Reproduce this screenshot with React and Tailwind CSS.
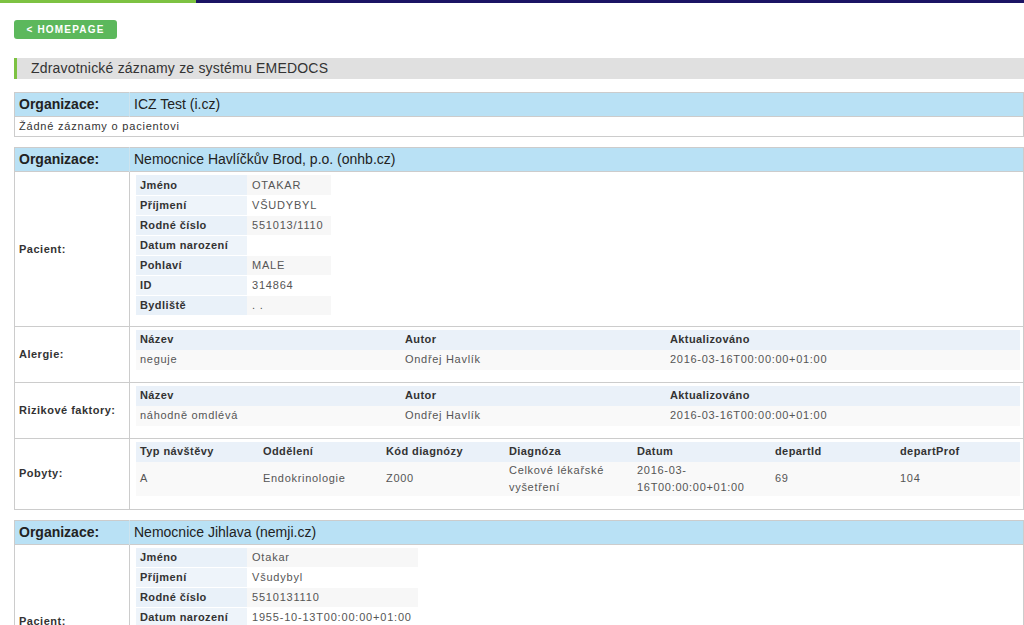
import React from 'react';

const patient1 = [
  ['Jméno', 'OTAKAR'],
  ['Příjmení', 'VŠUDYBYL'],
  ['Rodné číslo', '551013/1110'],
  ['Datum narození', ''],
  ['Pohlaví', 'MALE'],
  ['ID', '314864'],
  ['Bydliště', '. .'],
];

const patient2 = [
  ['Jméno', 'Otakar'],
  ['Příjmení', 'Všudybyl'],
  ['Rodné číslo', '5510131110'],
  ['Datum narození', '1955-10-13T00:00:00+01:00'],
  ['Pohlaví', 'MALE'],
  ['ID', '2093415'],
  ['Bydliště', 'Jihlava'],
];

const PatientTable = ({ rows }) => (
  <table className="border-collapse text-[11px]">
    <tbody>
      {rows.map(([label, value], i) => (
        <tr key={label} className="h-[20px] border-b border-white">
          <td className={`w-[111px] pl-[4px] font-bold tracking-[0.4px] text-[#333] ${i % 2 === 0 ? 'bg-[#e9f1f9]' : 'bg-[#eef4fa]'}`}>{label}</td>
          <td className={`min-w-[84px] pl-[5px] pr-[6px] tracking-[0.8px] text-[#555] ${i % 2 === 0 ? 'bg-[#f7f7f7]' : 'bg-white'}`}>{value}</td>
        </tr>
      ))}
    </tbody>
  </table>
);

const DataTable = ({ cols, widths, row, tall }) => (
  <table className="w-[884px] table-fixed border-collapse text-[11px]">
    <colgroup>
      {widths.map((w, i) => (
        <col key={i} style={{ width: w }} />
      ))}
    </colgroup>
    <thead>
      <tr className="h-[20px] bg-[#eaf1f9]">
        {cols.map((c) => (
          <th key={c} className="pl-[4px] text-left font-bold tracking-[0.4px] text-[#333]">{c}</th>
        ))}
      </tr>
    </thead>
    <tbody>
      <tr className={`${tall ? 'h-[34px]' : 'h-[20px]'} bg-[#f9f9f9]`}>
        {row.map((v, i) => (
          <td key={i} className="pl-[4px] pr-[4px] leading-[17px] tracking-[0.7px] text-[#555]">{v}</td>
        ))}
      </tr>
    </tbody>
  </table>
);

const Section = ({ label, children, bottom = 'pb-[12px]' }) => (
  <tr className="border-t border-[#ccc]">
    <td className="border-r border-[#ccc] pl-[4px] text-[11px] font-bold tracking-[0.5px] text-[#333]">{label}</td>
    <td className={`pl-[6px] pr-[3px] pt-[3px] align-top ${bottom}`}>{children}</td>
  </tr>
);

const OrgTable = ({ name, children }) => (
  <table className="mb-[10px] w-[1010px] border-collapse border border-[#ccc]">
    <thead>
      <tr className="h-[24px] bg-[#b9e1f5]">
        <th className="w-[115px] border-r border-[#cde3ee] pl-[4px] text-left text-[14px] font-bold text-[#222]">Organizace:</th>
        <td className="pl-[4px] text-[14px] text-[#222]">{name}</td>
      </tr>
    </thead>
    <tbody>{children}</tbody>
  </table>
);

const listCols = ['Název', 'Autor', 'Aktualizováno'];
const listWidths = ['265px', '265px', '354px'];

export default function App() {
  return (
    <div className="min-h-screen overflow-hidden bg-white font-['Liberation_Sans',Arial,sans-serif] text-[#333]">
      <div className="flex h-[3px]">
        <div className="w-[196px] bg-[#7dc242]" />
        <div className="flex-1 bg-[#1b1464]" />
      </div>
      <div className="pl-[14px] pt-[17px]">
        <button className="block h-[19px] w-[103px] rounded-[3px] bg-[#5cb85c] text-[10px] font-bold tracking-[1.2px] text-white">
          &lt; HOMEPAGE
        </button>
        <div className="mb-[13px] mt-[19px] h-[21px] w-[1010px] border-l-[3px] border-[#7dc242] bg-[#e0e0e0] pl-[14px] text-[14px] leading-[21px] tracking-[0.2px] text-[#333]">
          Zdravotnické záznamy ze systému EMEDOCS
        </div>

        <OrgTable name="ICZ Test (i.cz)">
          <tr className="h-[20px] border-t border-[#ccc]">
            <td colSpan={2} className="pl-[4px] text-[11px] tracking-[0.8px] text-[#333]">Žádné záznamy o pacientovi</td>
          </tr>
        </OrgTable>

        <OrgTable name="Nemocnice Havlíčkův Brod, p.o. (onhb.cz)">
          <Section label="Pacient:" bottom="pb-[10px]">
            <PatientTable rows={patient1} />
          </Section>
          <Section label="Alergie:">
            <DataTable cols={listCols} widths={listWidths} row={['neguje', 'Ondřej Havlík', '2016-03-16T00:00:00+01:00']} />
          </Section>
          <Section label="Rizikové faktory:">
            <DataTable cols={listCols} widths={listWidths} row={['náhodně omdlévá', 'Ondřej Havlík', '2016-03-16T00:00:00+01:00']} />
          </Section>
          <Section label="Pobyty:" bottom="pb-[13px]">
            <DataTable
              tall
              cols={['Typ návštěvy', 'Oddělení', 'Kód diagnózy', 'Diagnóza', 'Datum', 'departId', 'departProf']}
              widths={['123px', '123px', '123px', '128px', '138px', '125px', '124px']}
              row={['A', 'Endokrinologie', 'Z000', 'Celkové lékařské vyšetření', '2016-03-16T00:00:00+01:00', '69', '104']}
            />
          </Section>
        </OrgTable>

        <OrgTable name="Nemocnice Jihlava (nemji.cz)">
          <Section label="Pacient:" bottom="pb-[10px]">
            <PatientTable rows={patient2} />
          </Section>
        </OrgTable>
      </div>
    </div>
  );
}
